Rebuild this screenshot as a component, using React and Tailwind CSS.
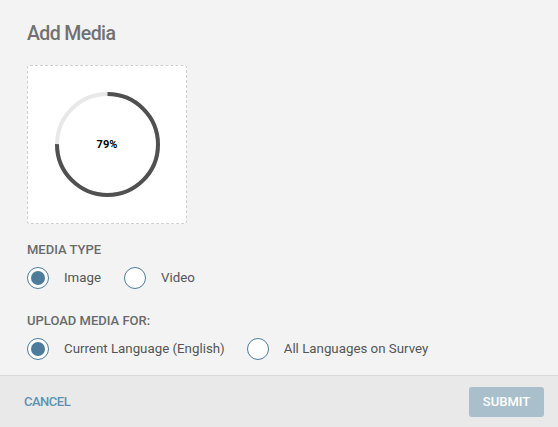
import React from "react";

function Radio({ checked, label }) {
  return (
    <label className="flex items-center gap-[15px]">
      <span className="w-[22px] h-[22px] rounded-full border-[1.5px] border-[#4d7c9b] bg-white flex items-center justify-center">
        {checked && <span className="w-[14px] h-[14px] rounded-full bg-[#4d7c9b]" />}
      </span>
      <span className="text-[13.3px] text-[#555]">{label}</span>
    </label>
  );
}

export default function App() {
  const r = 50.5;
  const c = 2 * Math.PI * r;
  const pct = 0.75;
  return (
    <div className="w-[558px] h-[427px] bg-[#f3f3f3] flex flex-col overflow-hidden" style={{ fontFamily: "Roboto, 'Liberation Sans', sans-serif" }}>
      <div className="flex-1 px-[27px] pt-[21px]">
        <h1 className="text-[19.5px] leading-[26px] text-[#717171] font-medium tracking-[-0.6px]">Add Media</h1>
        <div className="mt-[18px] w-[160px] h-[159px] bg-white border border-dashed border-[#cfcfcf] rounded-[3px] flex items-center justify-center">
          <div className="relative w-[105px] h-[105px]">
            <svg width="105" height="105" viewBox="0 0 105 105">
              <circle cx="52.5" cy="52.5" r={r} fill="none" stroke="#e8e8e8" strokeWidth="4" />
              <circle
                cx="52.5"
                cy="52.5"
                r={r}
                fill="none"
                stroke="#505050"
                strokeWidth="4"
                strokeDasharray={`${c * pct} ${c}`}
                transform="rotate(-90 52.5 52.5)"
              />
            </svg>
            <span className="absolute inset-0 flex items-center justify-center pt-[1px] text-[11px] font-bold text-black">79%</span>
          </div>
        </div>
        <div className="mt-[18px] text-[13px] font-medium text-[#6a6a6a] leading-[16px]">MEDIA TYPE</div>
        <div className="mt-[9px] flex items-center gap-[23px]">
          <Radio checked label="Image" />
          <Radio label="Video" />
        </div>
        <div className="mt-[24px] text-[13px] font-medium text-[#6a6a6a] leading-[16px]">UPLOAD MEDIA FOR:</div>
        <div className="mt-[9px] flex items-center gap-[22px]">
          <Radio checked label="Current Language (English)" />
          <Radio label="All Languages on Survey" />
        </div>
      </div>
      <div className="h-[52px] shrink-0 border-t border-[#d9d9d9] bg-[#e9e9e9] flex items-center justify-between pl-[24px] pr-[14px]">
        <span className="text-[13px] font-medium text-[#5b93b6] tracking-[-0.5px]">CANCEL</span>
        <button className="w-[75px] h-[30px] rounded-[3px] bg-[#a9bfcc] text-white text-[13px] font-medium">SUBMIT</button>
      </div>
    </div>
  );
}
